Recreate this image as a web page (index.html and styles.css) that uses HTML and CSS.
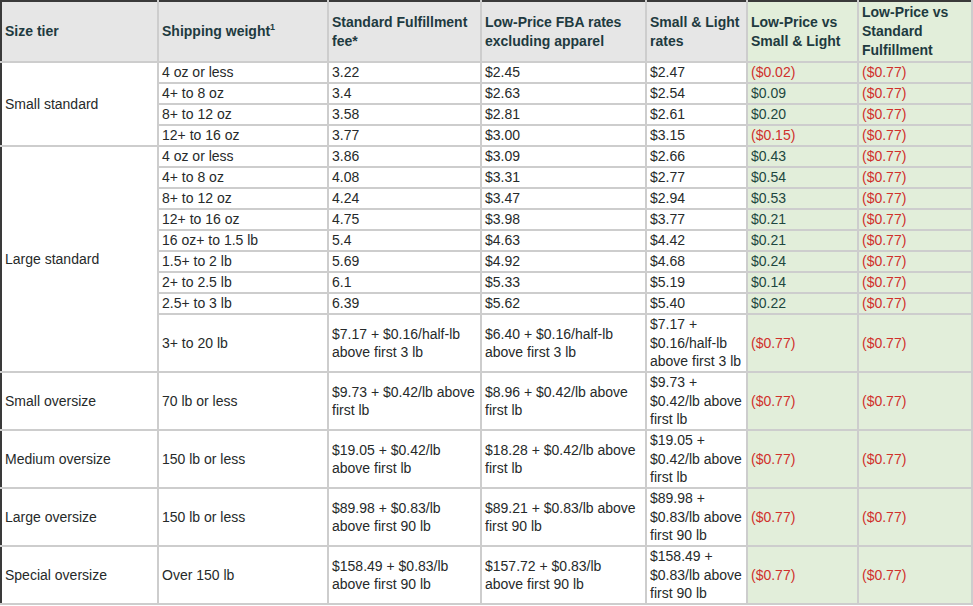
FILE: index.html
```html
<!DOCTYPE html>
<html>
<head>
<meta charset="utf-8">
<link rel="stylesheet" href="styles.css">
</head>
<body>
<table class="fees">
  <colgroup>
    <col class="c1"><col class="c2"><col class="c3"><col class="c4"><col class="c5"><col class="c6"><col class="c7">
  </colgroup>
  <thead>
    <tr>
      <th>Size tier</th>
      <th>Shipping weight<sup>1</sup></th>
      <th>Standard Fulfillment fee*</th>
      <th>Low-Price FBA rates excluding apparel</th>
      <th>Small &amp; Light rates</th>
      <th class="g">Low-Price vs Small &amp; Light</th>
      <th class="g">Low-Price vs Standard Fulfillment</th>
    </tr>
  </thead>
  <tbody>
    <tr><td rowspan="4">Small standard</td><td>4 oz or less</td><td>3.22</td><td>$2.45</td><td>$2.47</td><td class="g neg">($0.02)</td><td class="g neg">($0.77)</td></tr>
    <tr><td>4+ to 8 oz</td><td>3.4</td><td>$2.63</td><td>$2.54</td><td class="g pos">$0.09</td><td class="g neg">($0.77)</td></tr>
    <tr><td>8+ to 12 oz</td><td>3.58</td><td>$2.81</td><td>$2.61</td><td class="g pos">$0.20</td><td class="g neg">($0.77)</td></tr>
    <tr><td>12+ to 16 oz</td><td>3.77</td><td>$3.00</td><td>$3.15</td><td class="g neg">($0.15)</td><td class="g neg">($0.77)</td></tr>
    <tr><td rowspan="9">Large standard</td><td>4 oz or less</td><td>3.86</td><td>$3.09</td><td>$2.66</td><td class="g pos">$0.43</td><td class="g neg">($0.77)</td></tr>
    <tr><td>4+ to 8 oz</td><td>4.08</td><td>$3.31</td><td>$2.77</td><td class="g pos">$0.54</td><td class="g neg">($0.77)</td></tr>
    <tr><td>8+ to 12 oz</td><td>4.24</td><td>$3.47</td><td>$2.94</td><td class="g pos">$0.53</td><td class="g neg">($0.77)</td></tr>
    <tr><td>12+ to 16 oz</td><td>4.75</td><td>$3.98</td><td>$3.77</td><td class="g pos">$0.21</td><td class="g neg">($0.77)</td></tr>
    <tr><td>16 oz+ to 1.5 lb</td><td>5.4</td><td>$4.63</td><td>$4.42</td><td class="g pos">$0.21</td><td class="g neg">($0.77)</td></tr>
    <tr><td>1.5+ to 2 lb</td><td>5.69</td><td>$4.92</td><td>$4.68</td><td class="g pos">$0.24</td><td class="g neg">($0.77)</td></tr>
    <tr><td>2+ to 2.5 lb</td><td>6.1</td><td>$5.33</td><td>$5.19</td><td class="g pos">$0.14</td><td class="g neg">($0.77)</td></tr>
    <tr><td>2.5+ to 3 lb</td><td>6.39</td><td>$5.62</td><td>$5.40</td><td class="g pos">$0.22</td><td class="g neg">($0.77)</td></tr>
    <tr class="tall"><td>3+ to 20 lb</td><td>$7.17 + $0.16/half-lb above first 3 lb</td><td>$6.40 + $0.16/half-lb above first 3 lb</td><td>$7.17 + $0.16/half-lb above first 3 lb</td><td class="g neg">($0.77)</td><td class="g neg">($0.77)</td></tr>
    <tr class="tall"><td>Small oversize</td><td>70 lb or less</td><td>$9.73 + $0.42/lb above first lb</td><td>$8.96 + $0.42/lb above first lb</td><td>$9.73 + $0.42/lb above first lb</td><td class="g neg">($0.77)</td><td class="g neg">($0.77)</td></tr>
    <tr class="tall"><td>Medium oversize</td><td>150 lb or less</td><td>$19.05 + $0.42/lb above first lb</td><td>$18.28 + $0.42/lb above first lb</td><td>$19.05 + $0.42/lb above first lb</td><td class="g neg">($0.77)</td><td class="g neg">($0.77)</td></tr>
    <tr class="tall"><td>Large oversize</td><td>150 lb or less</td><td>$89.98 + $0.83/lb above first 90 lb</td><td>$89.21 + $0.83/lb above first 90 lb</td><td>$89.98 + $0.83/lb above first 90 lb</td><td class="g neg">($0.77)</td><td class="g neg">($0.77)</td></tr>
    <tr class="tall"><td>Special oversize</td><td>Over 150 lb</td><td>$158.49 + $0.83/lb above first 90 lb</td><td>$157.72 + $0.83/lb above first 90 lb</td><td>$158.49 + $0.83/lb above first 90 lb</td><td class="g neg">($0.77)</td><td class="g neg">($0.77)</td></tr>
  </tbody>
</table>
</body>
</html>
```

FILE: styles.css
```css
html, body {
  margin: 0;
  padding: 0;
  background: #ffffff;
}

.fees {
  border-collapse: collapse;
  table-layout: fixed;
  width: 971px;
  font-family: "Liberation Sans", Arial, sans-serif;
  font-size: 14px;
  line-height: 19px;
  color: #262a2a;
  border-top: 2px solid #3a3a3a;
  border-left: 2px solid #3a3a3a;
}

.c1 { width: 157px; }
.c2 { width: 170px; }
.c3 { width: 153px; }
.c4 { width: 165px; }
.c5 { width: 101px; }
.c6 { width: 111px; }
.c7 { width: 114px; }

.fees th,
.fees td {
  border: 2px solid #cdcdcd;
  padding: 0 2px 0 3px;
  text-align: left;
  vertical-align: middle;
}

.fees th {
  background: #e6e6e6;
  color: #1e3a40;
  font-weight: bold;
  height: 59px;
}

.fees th sup {
  font-size: 9px;
  line-height: 0;
  vertical-align: 6px;
}

.fees th.g,
.fees td.g {
  background: #e2eeda;
}

.fees thead th {
  border-top: 2px solid #3a3a3a;
}

.fees th:first-child,
.fees tbody td[rowspan],
.fees tr.tall td:first-child {
  border-left: 2px solid #3a3a3a;
}

.neg { color: #d0302c; }
.pos { color: #1d473f; }

.tall td {
  height: 56px;
  line-height: 18.5px;
}
```
